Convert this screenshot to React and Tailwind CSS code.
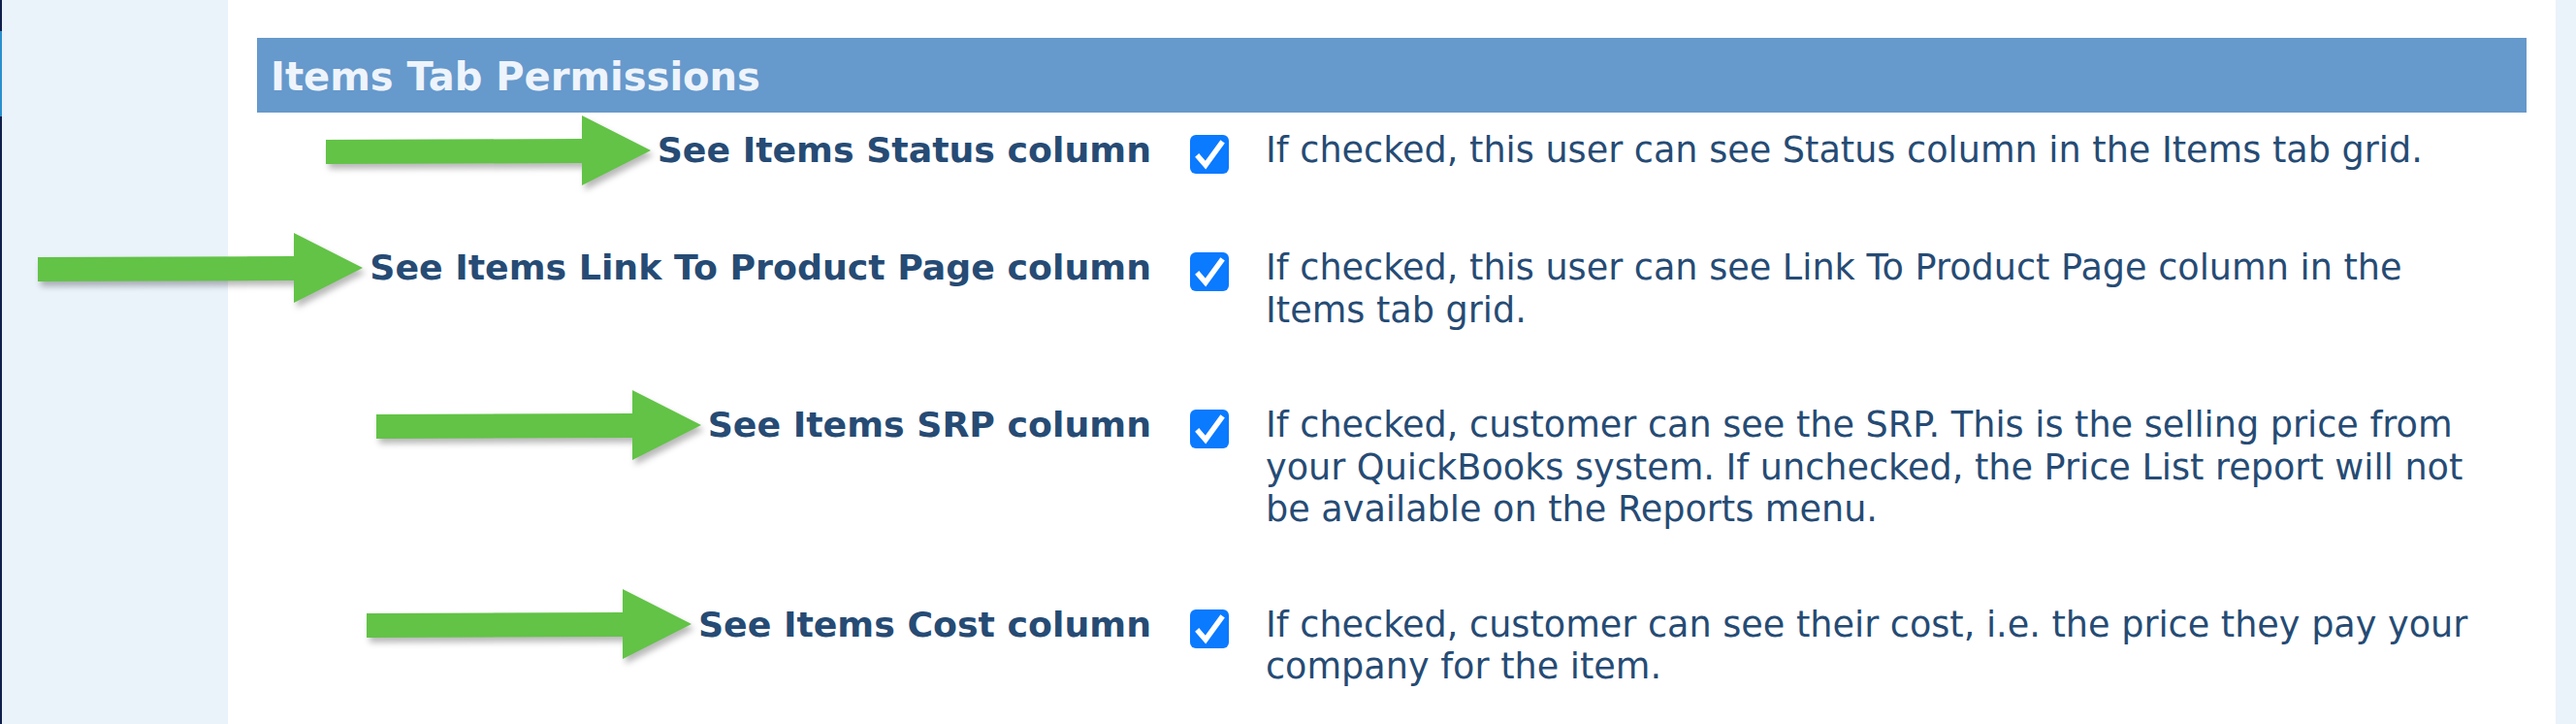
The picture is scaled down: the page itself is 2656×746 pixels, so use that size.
const rows = [
  {
    id: 'status',
    label: 'See Items Status column',
    text: 'If checked, this user can see Status column in the Items tab grid.',
  },
  {
    id: 'link',
    label: 'See Items Link To Product Page column',
    text: 'If checked, this user can see Link To Product Page column in the Items tab grid.',
  },
  {
    id: 'srp',
    label: 'See Items SRP column',
    text: 'If checked, customer can see the SRP. This is the selling price from your QuickBooks system. If unchecked, the Price List report will not be available on the Reports menu.',
  },
  {
    id: 'cost',
    label: 'See Items Cost column',
    text: 'If checked, customer can see their cost, i.e. the price they pay your company for the item.',
  },
];

const Arrow = () => (
  <svg
    width="335"
    height="72"
    viewBox="0 0 335 72"
    className="shrink-0 overflow-visible drop-shadow-[3px_5px_3px_rgba(0,0,0,0.28)]"
  >
    <polygon points="0,25 264,24 264,0 335,36 264,72 264,49 0,50" fill="#62c346" />
  </svg>
);

const Checkbox = () => (
  <div className="w-[40px] h-[40px] mt-[6px] rounded-[6px] bg-[#0a7aff] flex items-center justify-center shrink-0">
    <svg width="40" height="40" viewBox="0 0 40 40">
      <path
        d="M9 23 L16 31 L32 9"
        fill="none"
        stroke="white"
        strokeWidth="5.5"
        strokeLinecap="square"
        strokeLinejoin="miter"
      />
    </svg>
  </div>
);

const App = () => {
  return (
    <div className="w-[2656px] h-[746px] flex overflow-hidden bg-white font-['DejaVu_Sans',Verdana,sans-serif] text-[#264b74]">
      {/* left nav strip */}
      <div className="w-[235px] shrink-0 flex bg-[#eaf2fa]">
        <div className="w-[2px] flex flex-col">
          <div className="h-[32px] bg-[#0f1f4a]" />
          <div className="h-[88px] bg-[#2a8fcf]" />
          <div className="flex-1 bg-[#0f1f4a]" />
        </div>
      </div>

      <div className="flex-1 pl-[30px] pr-[30px] pt-[39px]">
        <div className="h-[77px] bg-[#6699cc] flex items-center pl-[14px] pt-[3px]">
          <h2 className="text-[40px] font-bold text-[#eef4fb] leading-none">
            Items Tab Permissions
          </h2>
        </div>

        <div className="flex flex-col gap-[75px] mt-[17px]">
          {rows.map((row) => (
            <div key={row.id} className="flex items-start">
              <div className="w-[922px] h-[43.5px] shrink-0 flex justify-end items-center gap-[7px] whitespace-nowrap">
                <Arrow />
                <span className="text-[36.3px] font-bold leading-[43.5px]">
                  {row.label}
                </span>
              </div>
              <div className="ml-[40px]">
                <Checkbox />
              </div>
              <p className="ml-[38px] w-[1262px] text-[36.6px] leading-[43.5px]">
                {row.text}
              </p>
            </div>
          ))}
        </div>
      </div>

      <div className="w-[21px] shrink-0 bg-[#eaf2fa]" />
    </div>
  );
};

export default App;
